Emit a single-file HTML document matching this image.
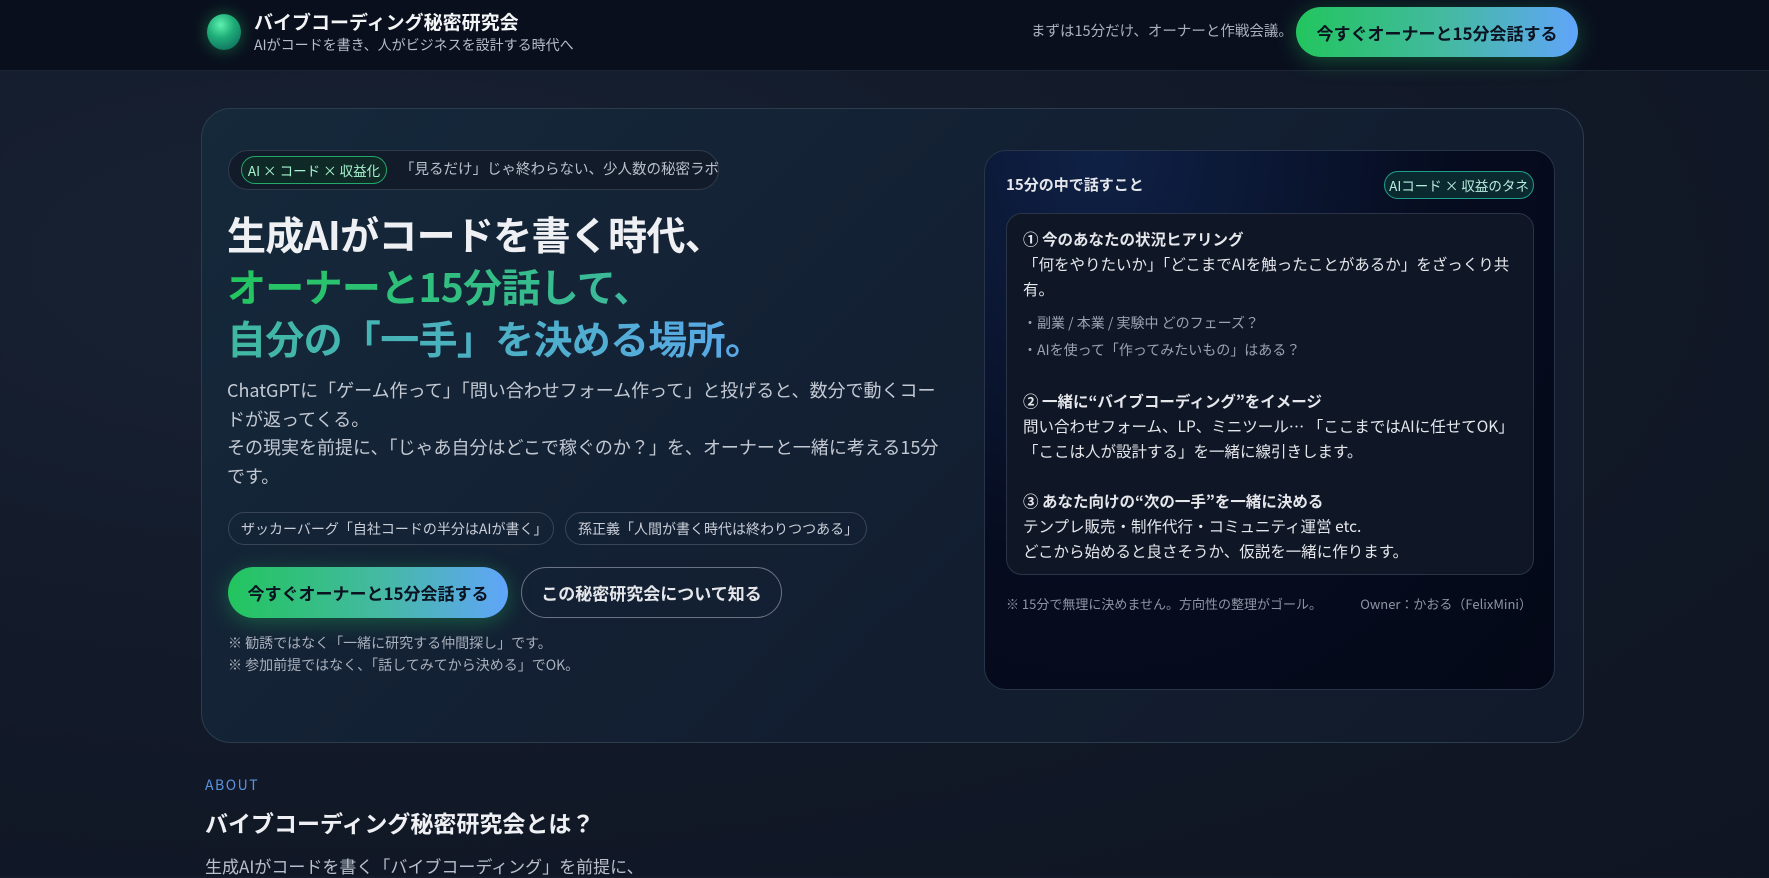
<!DOCTYPE html>
<html><head><meta charset="utf-8"><style>
*{margin:0;padding:0;box-sizing:border-box}
body{width:1769px;height:876px;overflow:hidden;background:#111827;font-family:"Noto Sans CJK JP","Liberation Sans",sans-serif;color:#e5e7eb;position:relative;
background:radial-gradient(ellipse at 20% 30%,#182233 0%,#111827 60%,#0f1522 100%)}
.abs{position:absolute;white-space:nowrap}
header{position:absolute;left:0;top:0;width:1769px;height:71px;background:#0a0f1e;border-bottom:1px solid #1c2536}
.logo{position:absolute;left:207px;top:14px;width:34px;height:36px;border-radius:50%;background:radial-gradient(circle at 40% 30%,#5ef0b0 0%,#1fae78 40%,#0b5a5a 100%);box-shadow:0 0 16px rgba(34,197,94,.45)}
.btn{border-radius:28px;background:linear-gradient(90deg,#22c55e,#45b9a3 55%,#60a5fa);color:#0b1220;font-weight:bold;display:flex;align-items:center;justify-content:center;box-shadow:0 4px 22px rgba(34,197,94,.35)}
.hero{position:absolute;left:201px;top:108px;width:1383px;height:635px;border-radius:30px;border:1px solid #2b3d4d;background:linear-gradient(135deg,#15293b 0%,#132033 45%,#111a2a 100%)}
.rcard{position:absolute;left:984px;top:150px;width:571px;height:540px;border-radius:22px;border:1px solid #28344a;background:radial-gradient(ellipse at 20% 0%,#0f2146 0%,#060c1f 55%,#040817 100%)}
.inner{position:absolute;left:21px;top:62px;width:528px;height:362px;border-radius:16px;border:1px solid #2a3446;background:#0f1626;padding:13px 16px;font-size:15.5px;line-height:25px;color:#e5e7eb}
.inner b{font-weight:bold}
.inner .bul{font-size:14px;color:#9aa3b2;line-height:27px;margin-top:8px}
.pill{position:absolute;height:33px;border-radius:17px;border:1px solid #3a4556;font-size:14px;color:#c9ced8;display:flex;align-items:center;padding:0 12px;white-space:nowrap}
</style></head><body>
<header>
<div class="logo"></div>
<div class="abs" style="left:254px;top:8px;font-size:19px;font-weight:bold;color:#f3f4f6">バイブコーディング秘密研究会</div>
<div class="abs" style="left:254px;top:35px;font-size:14px;color:#b6bcc8">AIがコードを書き、人がビジネスを設計する時代へ</div>
<div class="abs" style="left:1031px;top:20px;font-size:14.5px;color:#aab1be">まずは15分だけ、オーナーと作戦会議。</div>
<div class="abs btn" style="left:1296px;top:7px;width:282px;height:50px;font-size:17px">今すぐオーナーと15分会話する</div>
</header>

<div class="hero"></div>
<div class="abs" style="left:228px;top:150px;width:491px;height:40px;border-radius:20px;border:1px solid #2f3a4a;background:#121b2a"></div>
<div class="abs" style="left:241px;top:156px;width:146px;height:28px;border-radius:14px;border:1px solid #22a86a;background:#0f2a26;color:#a7f3d0;font-size:13.5px;display:flex;align-items:center;justify-content:center">AI × コード × 収益化</div>
<div class="abs" style="left:400px;top:158px;font-size:14.5px;color:#b9c0cc">「見るだけ」じゃ終わらない、少人数の秘密ラボ</div>

<div class="abs" style="left:227px;top:208px;font-size:39px;font-weight:bold;line-height:52px;color:#eef0f3;letter-spacing:-0.7px">生成AIがコードを書く時代、<br>
<span style="background:linear-gradient(90deg,#22c55e,#3fb8a0);-webkit-background-clip:text;color:transparent">オーナーと15分話して、</span><br>
<span style="background:linear-gradient(90deg,#3fb8a0,#5aa8ea);-webkit-background-clip:text;color:transparent">自分の「一手」を決める場所。</span></div>

<div class="abs" style="left:227px;top:376px;width:720px;white-space:normal;font-size:18px;line-height:28.5px;color:#c3c9d3">ChatGPTに「ゲーム作って」「問い合わせフォーム作って」と投げると、数分で動くコードが返ってくる。<br>その現実を前提に、「じゃあ自分はどこで稼ぐのか？」を、オーナーと一緒に考える15分です。</div>

<div class="pill" style="left:228px;top:512px;width:326px">ザッカーバーグ「自社コードの半分はAIが書く」</div>
<div class="pill" style="left:565px;top:512px;width:302px">孫正義「人間が書く時代は終わりつつある」</div>

<div class="abs btn" style="left:228px;top:567px;width:280px;height:51px;font-size:17px">今すぐオーナーと15分会話する</div>
<div class="abs" style="left:521px;top:567px;width:261px;height:51px;border-radius:26px;border:1.5px solid #6b7484;color:#e5e7eb;font-size:17px;font-weight:bold;display:flex;align-items:center;justify-content:center">この秘密研究会について知る</div>
<div class="abs" style="left:228px;top:632px;font-size:14px;line-height:22px;color:#a9b0bc">※ 勧誘ではなく「一緒に研究する仲間探し」です。<br>※ 参加前提ではなく、「話してみてから決める」でOK。</div>

<div class="rcard">
<div class="abs" style="left:21px;top:23px;font-size:15px;font-weight:bold;color:#e5e7eb">15分の中で話すこと</div>
<div class="abs" style="left:399px;top:20px;width:150px;height:28px;border-radius:14px;border:1.5px solid #1f9e8c;background:#0b2a30;color:#b8ece0;font-size:13.5px;display:flex;align-items:center;justify-content:center">AIコード × 収益のタネ</div>
<div class="inner">
<b>① 今のあなたの状況ヒアリング</b><br>「何をやりたいか」「どこまでAIを触ったことがあるか」をざっくり共有。
<div class="bul">・副業 / 本業 / 実験中 どのフェーズ？<br>・AIを使って「作ってみたいもの」はある？</div>
<div style="height:25px"></div>
<b>② 一緒に“バイブコーディング”をイメージ</b><br>問い合わせフォーム、LP、ミニツール… 「ここまではAIに任せてOK」「ここは人が設計する」を一緒に線引きします。
<div style="height:25px"></div>
<b>③ あなた向けの“次の一手”を一緒に決める</b><br>テンプレ販売・制作代行・コミュニティ運営 etc.<br>どこから始めると良さそうか、仮説を一緒に作ります。
</div>
<div class="abs" style="left:21px;top:443px;font-size:13px;color:#8d95a3">※ 15分で無理に決めません。方向性の整理がゴール。</div>
<div class="abs" style="right:22px;top:443px;font-size:13px;color:#8d95a3">Owner：かおる（FelixMini）</div>
</div>

<div class="abs" style="left:205px;top:775px;font-size:14px;letter-spacing:1.5px;color:#5b93e0">ABOUT</div>
<div class="abs" style="left:205px;top:805px;font-size:23px;font-weight:bold;color:#eef0f3">バイブコーディング秘密研究会とは？</div>
<div class="abs" style="left:205px;top:853px;font-size:17px;color:#b9c0cc">生成AIがコードを書く「バイブコーディング」を前提に、</div>
</body></html>
